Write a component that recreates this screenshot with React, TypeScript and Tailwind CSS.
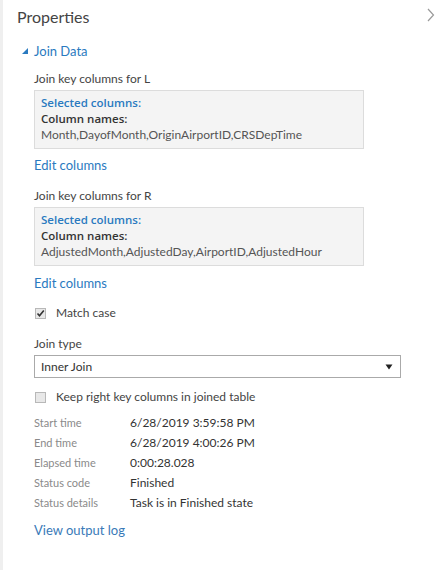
import React from "react";

const font = { fontFamily: 'Lato, "Open Sans", sans-serif' };
const semi = { fontFamily: '"Open Sans", Lato, sans-serif' };

function InfoBox({ names }: { names: string }) {
  return (
    <div className="mt-[3px] w-[330px] border border-[#dcdcdc] bg-[#f4f4f4] px-[6px] pt-[4px] pb-[5px] text-[12px] leading-[16px]">
      <div className="text-[11.5px] font-semibold text-[#2a7ac0]" style={semi}>Selected columns:</div>
      <div className="text-[11.5px] font-semibold text-[#333]" style={semi}>Column names:</div>
      <div className="text-[#555]">{names}</div>
    </div>
  );
}

function Row({ label, value }: { label: string; value: string }) {
  return (
    <div className="flex h-[20px] items-center">
      <div className="w-[96px] text-[11px] text-[#8a8a8a]">{label}</div>
      <div className="text-[12px] text-[#333]">{value}</div>
    </div>
  );
}

export default function App() {
  return (
    <div className="flex h-[570px] w-[445px] bg-white" style={font}>
      <div className="w-[3px] bg-[#efefef]" />
      <div className="relative flex-1 pl-[14px]">
        <div className="flex items-center justify-between pt-[6px] pr-[10px]">
          <div className="text-[16px] leading-[22px] text-[#444]">Properties</div>
          <svg width="8" height="14" viewBox="0 0 8 14" className="mt-[-4px]">
            <path d="M1 1 L6.5 7 L1 13" fill="none" stroke="#9a9a9a" strokeWidth="1.2" />
          </svg>
        </div>
        <div className="mt-[14px] flex items-center text-[13px] leading-[18px] text-[#2a7ac0]">
          <svg width="8" height="8" viewBox="0 0 8 8" className="ml-[4px] mr-[5px]">
            <path d="M7 1 L7 7 L1 7 Z" fill="#2a7ac0" />
          </svg>
          <span>Join Data</span>
        </div>
        <div className="pl-[17px]">
          <div className="mt-[11px] text-[12px] leading-[16px] text-[#444]">Join key columns for L</div>
          <InfoBox names="Month,DayofMonth,OriginAirportID,CRSDepTime" />
          <div className="mt-[7px] text-[13px] leading-[18px] text-[#2a7ac0]">Edit columns</div>
          <div className="mt-[14px] text-[12px] leading-[16px] text-[#444]">Join key columns for R</div>
          <InfoBox names="AdjustedMonth,AdjustedDay,AirportID,AdjustedHour" />
          <div className="mt-[8px] text-[13px] leading-[18px] text-[#2a7ac0]">Edit columns</div>
          <div className="mt-[12px] flex items-center">
            <div className="ml-[1px] flex h-[11px] w-[11px] items-center justify-center border border-[#b8b8b8] bg-[#e8e8e8]">
              <svg width="9" height="9" viewBox="0 0 9 9">
                <path d="M1.5 4.5 L3.5 6.8 L7.8 1.5" fill="none" stroke="#333" strokeWidth="1.6" />
              </svg>
            </div>
            <span className="ml-[10px] text-[12px] text-[#444]">Match case</span>
          </div>
          <div className="mt-[14px] text-[12px] leading-[16px] text-[#444]">Join type</div>
          <div className="mt-[3px] flex h-[23px] w-[367px] items-center justify-between border border-[#aaa] pl-[6px] pr-[7px]">
            <span className="text-[12px] text-[#333]">Inner Join</span>
            <svg width="8" height="6" viewBox="0 0 8 6">
              <path d="M0.5 0.5 L7.5 0.5 L4 5.5 Z" fill="#222" />
            </svg>
          </div>
          <div className="mt-[10px] flex items-center">
            <div className="ml-[1px] h-[11px] w-[11px] border border-[#b8b8b8] bg-[#e8e8e8]" />
            <span className="ml-[10px] text-[12px] text-[#444]">Keep right key columns in joined table</span>
          </div>
          <div className="mt-[7px]">
            <Row label="Start time" value="6/28/2019 3:59:58 PM" />
            <Row label="End time" value="6/28/2019 4:00:26 PM" />
            <Row label="Elapsed time" value="0:00:28.028" />
            <Row label="Status code" value="Finished" />
            <Row label="Status details" value="Task is in Finished state" />
          </div>
          <div className="mt-[8px] text-[13px] leading-[18px] text-[#3a7ab8]">View output log</div>
        </div>
      </div>
    </div>
  );
}
